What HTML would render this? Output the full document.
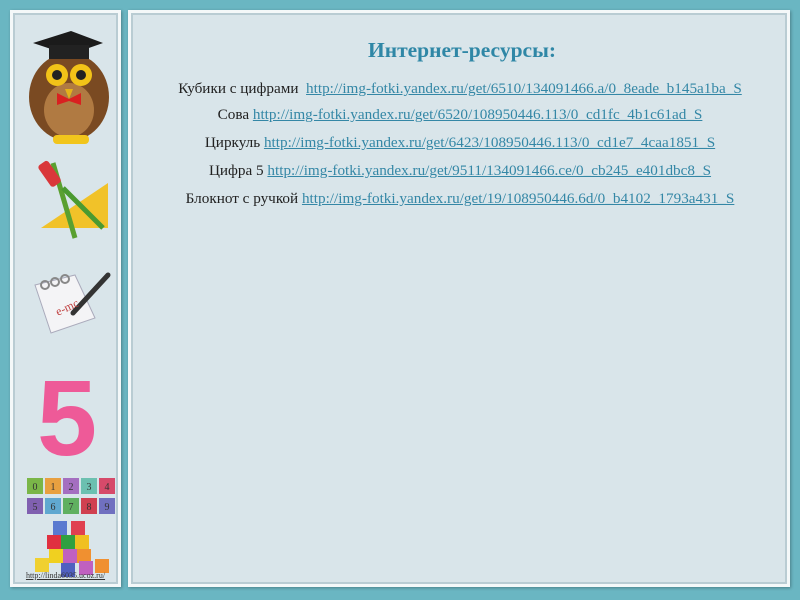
<!DOCTYPE html>
<html><head><meta charset="utf-8"><style>
*{margin:0;padding:0;box-sizing:border-box}
body{width:800px;height:600px;background:#6ab6c2;position:relative;overflow:hidden;font-family:"Liberation Serif",serif}
.panel{position:absolute;background:#d9e5ea;border:3px solid #f4f8f9;box-shadow:inset 0 0 0 2px #b9ccd3,1px 1px 3px rgba(0,0,0,.3)}
#left{left:10px;top:10px;width:111px;height:577px}
#main{left:128px;top:10px;width:662px;height:577px}
h1{position:absolute;top:25px;left:0;width:100%;text-align:center;font-size:21.5px;color:#2f87a6;font-weight:bold;padding-left:6px}
.l{position:absolute;left:0;width:100%;text-align:center;font-size:15.2px;color:#222;white-space:nowrap;padding-left:2px}
.l a{color:#3487a6;text-decoration:underline}
.ft{position:absolute;left:0;width:100%;bottom:4px;text-align:center;font-size:8px;color:#333;text-decoration:underline}
</style></head><body>
<div class="panel" id="left">
<svg width="105" height="570" style="position:absolute;left:0;top:0">
 <ellipse cx="56" cy="84" rx="40" ry="44" fill="#7a4a22"/>
 <ellipse cx="56" cy="97" rx="25" ry="27" fill="#b07a42"/>
 <circle cx="44" cy="62" r="11" fill="#f2c318"/><circle cx="68" cy="62" r="11" fill="#f2c318"/>
 <circle cx="44" cy="62" r="5" fill="#222"/><circle cx="68" cy="62" r="5" fill="#222"/>
 <path d="M52 76 L60 76 L56 86Z" fill="#e3b21a"/>
 <path d="M44 80 L56 86 L68 80 L68 92 L56 88 L44 92Z" fill="#d92020"/>
 <path d="M20 30 L58 18 L90 30 L56 42Z" fill="#1b1b1b"/>
 <rect x="36" y="32" width="40" height="14" fill="#222"/>
 <rect x="40" y="122" width="36" height="9" rx="4" fill="#f1c51c"/>
 <path d="M28 215 L95 170 L95 215Z" fill="#f1c229"/>
 <path d="M40 150 L62 225" stroke="#5aa030" stroke-width="5"/>
 <path d="M50 175 L90 215" stroke="#4a9a30" stroke-width="5"/>
 <rect x="30" y="148" width="12" height="26" rx="3" fill="#d9373a" transform="rotate(-35 36 160)"/>
 <path d="M22 272 L62 262 L82 305 L38 320Z" fill="#f4f4f6" stroke="#aab" stroke-width="1"/>
 <circle cx="32" cy="272" r="4" fill="none" stroke="#888" stroke-width="2"/>
 <circle cx="42" cy="269" r="4" fill="none" stroke="#888" stroke-width="2"/>
 <circle cx="52" cy="266" r="4" fill="none" stroke="#888" stroke-width="2"/>
 <path d="M60 300 L95 262" stroke="#333" stroke-width="5" stroke-linecap="round"/>
 <text x="42" y="300" font-size="12" fill="#c04040" transform="rotate(-25 50 295)" font-family="Liberation Serif">e-mc</text>
 <text x="54" y="442" font-size="108" font-weight="bold" fill="#ee5a98" text-anchor="middle" font-family="Liberation Sans">5</text>
 <g font-size="10" font-family="Liberation Serif" text-anchor="middle" fill="#333">
 <rect x="14" y="465" width="16" height="16" fill="#7ab648"/><rect x="32" y="465" width="16" height="16" fill="#e8a040"/><rect x="50" y="465" width="16" height="16" fill="#a46fc0"/><rect x="68" y="465" width="16" height="16" fill="#6cc0b0"/><rect x="86" y="465" width="16" height="16" fill="#d64a6a"/>
 <rect x="14" y="485" width="16" height="16" fill="#8060b0"/><rect x="32" y="485" width="16" height="16" fill="#60a8d0"/><rect x="50" y="485" width="16" height="16" fill="#60b060"/><rect x="68" y="485" width="16" height="16" fill="#d04050"/><rect x="86" y="485" width="16" height="16" fill="#7070c0"/>
 <text x="22" y="477">0</text><text x="40" y="477">1</text><text x="58" y="477">2</text><text x="76" y="477">3</text><text x="94" y="477">4</text>
 <text x="22" y="497">5</text><text x="40" y="497">6</text><text x="58" y="497">7</text><text x="76" y="497">8</text><text x="94" y="497">9</text>
 </g>
 <rect x="40" y="508" width="14" height="14" fill="#5a7ad0"/><rect x="58" y="508" width="14" height="14" fill="#e04050"/>
 <rect x="34" y="522" width="14" height="14" fill="#e03040"/><rect x="48" y="522" width="14" height="14" fill="#30a040"/><rect x="62" y="522" width="14" height="14" fill="#f0c020"/>
 <rect x="36" y="536" width="14" height="14" fill="#f0d020"/><rect x="50" y="536" width="14" height="14" fill="#c060c0"/><rect x="64" y="536" width="14" height="14" fill="#f09030"/>
 <rect x="22" y="545" width="14" height="14" fill="#f0d030"/><rect x="48" y="550" width="14" height="14" fill="#5060c0"/><rect x="66" y="548" width="14" height="14" fill="#c060c0"/><rect x="82" y="546" width="14" height="14" fill="#f09030"/>
</svg>
<div class="ft">http://linda6035.ucoz.ru/</div>
</div>
<div class="panel" id="main">
<h1>Интернет-ресурсы:</h1>
<div class="l" style="top:67px">Кубики с цифрами &nbsp;<a>http://img-fotki.yandex.ru/get/6510/134091466.a/0_8eade_b145a1ba_S</a></div>
<div class="l" style="top:93px">Сова <a>http://img-fotki.yandex.ru/get/6520/108950446.113/0_cd1fc_4b1c61ad_S</a></div>
<div class="l" style="top:121px">Циркуль <a>http://img-fotki.yandex.ru/get/6423/108950446.113/0_cd1e7_4caa1851_S</a></div>
<div class="l" style="top:149px">Цифра 5 <a>http://img-fotki.yandex.ru/get/9511/134091466.ce/0_cb245_e401dbc8_S</a></div>
<div class="l" style="top:177px">Блокнот с ручкой <a>http://img-fotki.yandex.ru/get/19/108950446.6d/0_b4102_1793a431_S</a></div>
</div>
</body></html>
